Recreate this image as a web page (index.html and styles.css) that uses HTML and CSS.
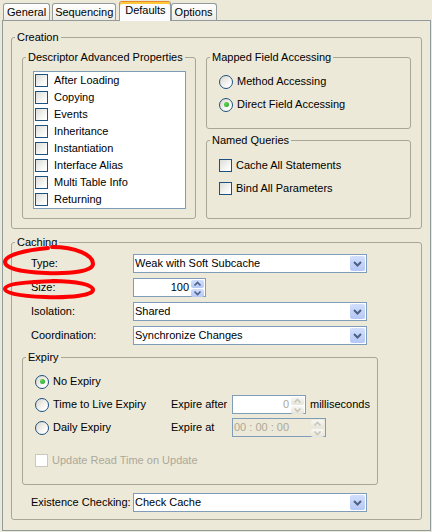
FILE: index.html
```html
<!DOCTYPE html>
<html>
<head>
<meta charset="utf-8">
<title>Descriptor Defaults</title>
<link rel="stylesheet" href="styles.css">
</head>
<body>
<div class="window">
  <div class="tabs">
    <div class="tab t-general">General</div>
    <div class="tab t-seq">Sequencing</div>
    <div class="tab active t-defaults">Defaults</div>
    <div class="tab t-options">Options</div>
  </div>

  <div class="panel">
    <fieldset class="group creation">
      <legend>Creation</legend>
      <div class="creation-body">
        <fieldset class="group descriptor">
          <legend>Descriptor Advanced Properties</legend>
          <div class="descriptor-body">
            <div class="listbox">
              <div class="list-row"><span class="check"></span>After Loading</div>
              <div class="list-row"><span class="check"></span>Copying</div>
              <div class="list-row"><span class="check"></span>Events</div>
              <div class="list-row"><span class="check"></span>Inheritance</div>
              <div class="list-row"><span class="check"></span>Instantiation</div>
              <div class="list-row"><span class="check"></span>Interface Alias</div>
              <div class="list-row"><span class="check"></span>Multi Table Info</div>
              <div class="list-row"><span class="check"></span>Returning</div>
            </div>
          </div>
        </fieldset>

        <div class="side-col">
          <fieldset class="group mapped">
            <legend>Mapped Field Accessing</legend>
            <div class="opt-body mapped-body">
              <div class="opt"><span class="radio"></span>Method Accessing</div>
              <div class="opt"><span class="radio on"></span>Direct Field Accessing</div>
            </div>
          </fieldset>
          <fieldset class="group queries">
            <legend>Named Queries</legend>
            <div class="opt-body queries-body">
              <div class="opt"><span class="check"></span>Cache All Statements</div>
              <div class="opt"><span class="check"></span>Bind All Parameters</div>
            </div>
          </fieldset>
        </div>
      </div>
    </fieldset>

    <fieldset class="group caching">
      <legend>Caching</legend>
      <div class="caching-body">
        <div class="form">
          <span class="field-label">Type:</span>
          <div class="combo"><span class="combo-text">Weak with Soft Subcache</span><span class="combo-btn"><svg viewBox="0 0 15 15" width="15" height="15"><path d="M4 6 L7.5 9.5 L11 6" fill="none" stroke="#4D6185" stroke-width="2"/></svg></span></div>

          <span class="field-label">Size:</span>
          <div class="spinner"><span class="spin-text">100</span><span class="spin-btns"><span class="spin-btn"><svg viewBox="0 0 13 8" width="13" height="8"><path d="M3.5 5.5 L6.5 2.5 L9.5 5.5" fill="none" stroke="#4D6185" stroke-width="1.6"/></svg></span><span class="spin-btn"><svg viewBox="0 0 13 8" width="13" height="8"><path d="M3.5 2.5 L6.5 5.5 L9.5 2.5" fill="none" stroke="#4D6185" stroke-width="1.6"/></svg></span></span></div>

          <span class="field-label">Isolation:</span>
          <div class="combo"><span class="combo-text">Shared</span><span class="combo-btn"><svg viewBox="0 0 15 15" width="15" height="15"><path d="M4 6 L7.5 9.5 L11 6" fill="none" stroke="#4D6185" stroke-width="2"/></svg></span></div>

          <span class="field-label">Coordination:</span>
          <div class="combo"><span class="combo-text">Synchronize Changes</span><span class="combo-btn"><svg viewBox="0 0 15 15" width="15" height="15"><path d="M4 6 L7.5 9.5 L11 6" fill="none" stroke="#4D6185" stroke-width="2"/></svg></span></div>
        </div>

        <fieldset class="group expiry">
          <legend>Expiry</legend>
          <div class="expiry-body">
            <div class="expiry-grid">
              <div class="opt"><span class="radio on"></span>No Expiry</div>
              <span></span>
              <span></span>

              <div class="opt"><span class="radio"></span>Time to Live Expiry</div>
              <span class="field-label">Expire after</span>
              <div class="expire-after">
                <div class="spinner disabled after-spin"><span class="spin-text">0</span><span class="spin-btns"><span class="spin-btn"><svg viewBox="0 0 13 8" width="13" height="8"><path d="M3.5 5.5 L6.5 2.5 L9.5 5.5" fill="none" stroke="#C9C7BA" stroke-width="1.6"/></svg></span><span class="spin-btn"><svg viewBox="0 0 13 8" width="13" height="8"><path d="M3.5 2.5 L6.5 5.5 L9.5 2.5" fill="none" stroke="#C9C7BA" stroke-width="1.6"/></svg></span></span></div>
                <span class="unit">milliseconds</span>
              </div>

              <div class="opt"><span class="radio"></span>Daily Expiry</div>
              <span class="field-label">Expire at</span>
              <div class="spinner disabled time-spin"><span class="spin-text">00 : 00 : 00</span><span class="spin-btns"><span class="spin-btn"><svg viewBox="0 0 13 8" width="13" height="8"><path d="M3.5 5.5 L6.5 2.5 L9.5 5.5" fill="none" stroke="#C9C7BA" stroke-width="1.6"/></svg></span><span class="spin-btn"><svg viewBox="0 0 13 8" width="13" height="8"><path d="M3.5 2.5 L6.5 5.5 L9.5 2.5" fill="none" stroke="#C9C7BA" stroke-width="1.6"/></svg></span></span></div>
            </div>
            <div class="opt update-row disabled-text"><span class="check off"></span>Update Read Time on Update</div>
          </div>
        </fieldset>

        <div class="form existence">
          <span class="field-label">Existence Checking:</span>
          <div class="combo"><span class="combo-text">Check Cache</span><span class="combo-btn"><svg viewBox="0 0 15 15" width="15" height="15"><path d="M4 6 L7.5 9.5 L11 6" fill="none" stroke="#4D6185" stroke-width="2"/></svg></span></div>
        </div>
      </div>
    </fieldset>
  </div>
</div>

<!-- hand-drawn highlight rings around the Type and Size labels -->
<svg class="marks" width="432" height="532" viewBox="0 0 432 532">
  <path d="M52 247 C76 247 93 255 93 264 C93 271 72 274 46 273 C20 272 5 268 5 262 C5 255 26 250 48 248" fill="none" stroke="#FF0000" stroke-width="4" stroke-linecap="round"/>
  <path d="M52 281 C78 281 93 285 93 290 C93 295 72 298 45 297 C18 296 5 293 5 289 C5 284 26 282 56 281" fill="none" stroke="#FF0000" stroke-width="4" stroke-linecap="round"/>
</svg>
</body>
</html>
```

FILE: styles.css
```css
body {
  margin: 0;
  width: 432px;
  height: 532px;
  overflow: hidden;
  position: relative;
  background: #ECE9D8;
  color: #000;
  font: 11px/13px "Liberation Sans", Arial, sans-serif;
}

.window {
  padding: 0 1px 0 2px;
}

/* ---- tab strip ---- */
.tabs {
  display: flex;
  align-items: flex-end;
  height: 20px;
  padding-left: 1px;
  gap: 2px;
  position: relative;
  z-index: 1;
}

.tab {
  height: 16px;
  line-height: 16px;
  padding: 0 3px;
  border: 1px solid #919B9C;
  border-bottom: 0;
  border-radius: 3px 3px 0 0;
  background: linear-gradient(#FFFFFF, #ECEBE6);
  white-space: nowrap;
}

.tab.t-seq {
  padding: 0 2px;
}

.tab.active {
  height: 19px;
  line-height: 17px;
  margin: 0 -2px -1px 1px;
  padding: 0 4px 0 5px;
  background: #FCFCFE;
  border-top: 1px solid #E68B2C;
  box-shadow: inset 0 2px 0 #FFC73C;
}

.panel {
  border: 1px solid #919B9C;
  padding: 10px 8px 10px 8px;
  background: #ECE9D8;
}

/* ---- group boxes ---- */
.group {
  margin: 0;
  padding: 0;
  min-width: 0;
  border: 1px solid #A7A699;
  border-radius: 3px;
}

.group > legend {
  margin-left: 3px;
  padding: 0 2px;
  line-height: 13px;
}

.creation-body {
  display: flex;
  gap: 10px;
  padding: 7px 10px 9px 10px;
}

.descriptor {
  width: 172px;
  flex: none;
}

.descriptor-body {
  padding: 7px 9px 9px 10px;
}

.listbox {
  border: 1px solid #7F9DB9;
  background: #FFFFFF;
}

.list-row {
  display: flex;
  align-items: center;
  gap: 6px;
  height: 17px;
  padding-left: 1px;
}

.side-col {
  flex: 1;
  display: flex;
  flex-direction: column;
  gap: 5px;
}

.queries {
  flex: 1;
}

.opt-body {
  padding: 6px 12px 12px 12px;
}

.queries-body {
  padding-top: 7px;
}

.opt {
  display: flex;
  align-items: center;
  gap: 4px;
  height: 23px;
  white-space: nowrap;
}

/* ---- check boxes and radio buttons ---- */
.check {
  flex: none;
  width: 11px;
  height: 11px;
  border: 1px solid #1C5180;
  background: linear-gradient(135deg, #DCDCD7, #FFFFFF 85%);
}

.check.off {
  border-color: #CAC8BB;
  background: #FFFFFF;
}

.radio {
  flex: none;
  position: relative;
  width: 12px;
  height: 12px;
  border: 1px solid #1C5180;
  border-radius: 50%;
  background: linear-gradient(135deg, #DCD7CB, #FFFFFF 80%);
}

.radio.on::after {
  content: "";
  position: absolute;
  left: 3.5px;
  top: 3.5px;
  width: 5px;
  height: 5px;
  border-radius: 50%;
  background: radial-gradient(circle at 35% 35%, #62D85E, #21A121);
}

/* ---- caching form ---- */
.caching {
  margin-top: 7px;
}

.caching-body {
  padding: 5px 10px 7px 10px;
}

.form {
  display: grid;
  grid-template-columns: 102px 234px;
  row-gap: 5px;
  padding-left: 9px;
  align-items: center;
}

.field-label {
  white-space: nowrap;
}

.combo {
  display: flex;
  align-items: center;
  height: 17px;
  border: 1px solid #7F9DB9;
  background: #FFFFFF;
}

.combo-text {
  flex: 1;
  padding-left: 1px;
  white-space: nowrap;
}

.combo-btn {
  width: 15px;
  height: 15px;
  margin-right: 1px;
  border-radius: 2px;
  background: linear-gradient(#D2DEFD, #B4C8F6);
  display: flex;
}

.spinner {
  display: flex;
  align-items: stretch;
  width: 71px;
  height: 17px;
  border: 1px solid #7F9DB9;
  background: #FFFFFF;
}

.spin-text {
  flex: 1;
  text-align: right;
  padding-right: 2px;
  line-height: 17px;
}

.spin-btns {
  width: 13px;
  margin: 1px 1px 1px 0;
  display: flex;
  flex-direction: column;
  gap: 1px;
}

.spin-btn {
  flex: 1;
  border-radius: 2px;
  background: linear-gradient(#D2DEFD, #B4C8F6);
  display: flex;
  align-items: center;
}

/* ---- expiry group ---- */
.expiry {
  width: 354px;
  margin-top: 6px;
}

.expiry-body {
  padding: 6px 12px 12px 12px;
}

.expiry-grid {
  display: grid;
  grid-template-columns: 136px 61px auto;
  align-items: center;
}

.expire-after {
  display: flex;
  align-items: center;
  gap: 4px;
}

.spinner.disabled .spin-text {
  color: #ACA899;
}

.spinner.disabled .spin-btn {
  background: linear-gradient(#F7F7F4, #E6E4DA);
}

.after-spin {
  width: 72px;
}

.time-spin {
  width: 92px;
  background: #ECE9D8;
}

.time-spin .spin-text {
  text-align: left;
  padding-left: 1px;
}

.update-row {
  margin-top: 10px;
}

.disabled-text {
  color: #ACA899;
}

.existence {
  margin-top: 8px;
}

/* annotation layer */
.marks {
  position: absolute;
  left: 0;
  top: 0;
  pointer-events: none;
}
```
